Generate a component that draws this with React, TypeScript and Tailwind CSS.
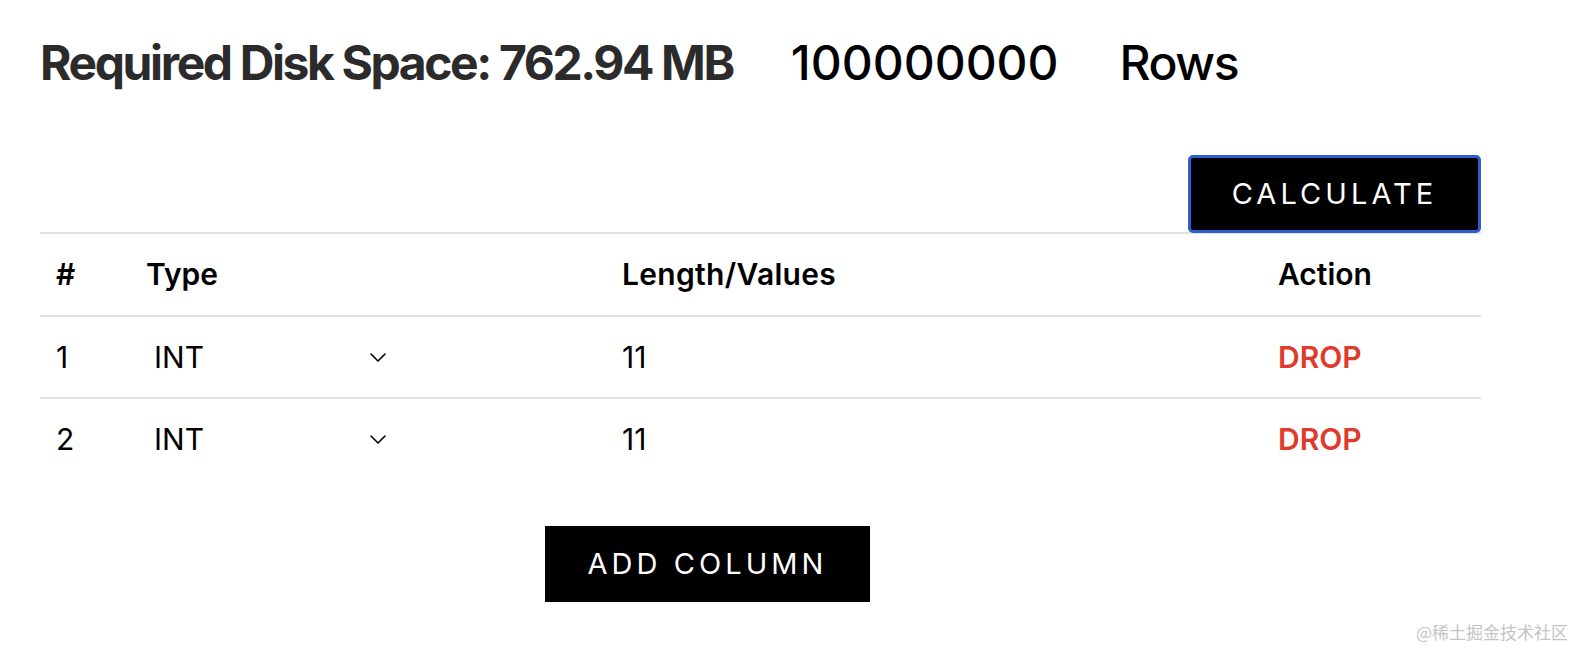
import * as React from 'react'

const font = { fontFamily: 'Inter, "Noto Sans", sans-serif' }

type Column = { id: number; type: string; length: string }

function Chevron() {
	return (
		<svg width="16" height="9" viewBox="0 0 16 9" fill="none" className="text-black">
			<path d="M1 1 L8 8 L15 1" stroke="currentColor" strokeWidth="1.6" strokeLinecap="round" strokeLinejoin="round" />
		</svg>
	)
}

export default function App() {
	const [columns] = React.useState<Column[]>([
		{ id: 1, type: 'INT', length: '11' },
		{ id: 2, type: 'INT', length: '11' },
	])

	return (
		<div className="relative min-h-[648px] bg-white text-black" style={font}>
			<div className="w-[1441px] ml-10 pt-[33px]">
				<div className="flex items-baseline">
					<h1 className="text-[48px] font-bold tracking-[-0.05em] text-[#2b2b2b] leading-[60px]">
						Required Disk Space: 762.94 MB
					</h1>
					<span className="ml-[58px] text-[48px] font-medium leading-[60px]">100000000</span>
					<span className="ml-[61px] text-[48px] font-medium tracking-[-0.03em] leading-[60px]">Rows</span>
				</div>

				<div className="flex justify-end mt-[62px]">
					<button className="w-[293px] h-[78px] rounded-[5px] border-[3px] border-[#2d5fd0] bg-black text-white text-[29px] tracking-[0.14em]">
						CALCULATE
					</button>
				</div>

				<table className="w-full border-collapse text-[30px] -mt-px">
					<thead>
						<tr className="border-t-2 border-b-2 border-[#e2e2e2] h-[83px]">
							<th className="w-[90px] px-4 text-left font-semibold">#</th>
							<th className="w-[476px] px-4 text-left font-semibold">Type</th>
							<th className="w-[656px] px-4 text-left font-semibold tracking-[0.01em]">Length/Values</th>
							<th className="px-4 text-left font-semibold">Action</th>
						</tr>
					</thead>
					<tbody>
						{columns.map((col, i) => (
							<tr
								key={col.id}
								className={i < columns.length - 1 ? 'h-[82px] border-b-2 border-[#e2e2e2]' : 'h-[82px]'}
							>
								<td className="px-4">{col.id}</td>
								<td className="px-4">
									<div className="flex w-[242px] items-center justify-between pl-2 pr-[2px]">
										<span>{col.type}</span>
										<Chevron />
									</div>
								</td>
								<td className="px-4">{col.length}</td>
								<td className="px-4 font-semibold text-[#e03a2c]">DROP</td>
							</tr>
						))}
					</tbody>
				</table>

				<button className="mt-[46px] ml-[505px] w-[325px] h-[76px] bg-black text-white text-[29px] tracking-[0.14em]">
					ADD COLUMN
				</button>
			</div>

			<div
				className="absolute right-[16px] bottom-[4px] text-[17px] text-[#c4c4c4]"
				style={{ fontFamily: '"Noto Sans CJK SC", sans-serif' }}
			>
				@稀土掘金技术社区
			</div>
		</div>
	)
}
